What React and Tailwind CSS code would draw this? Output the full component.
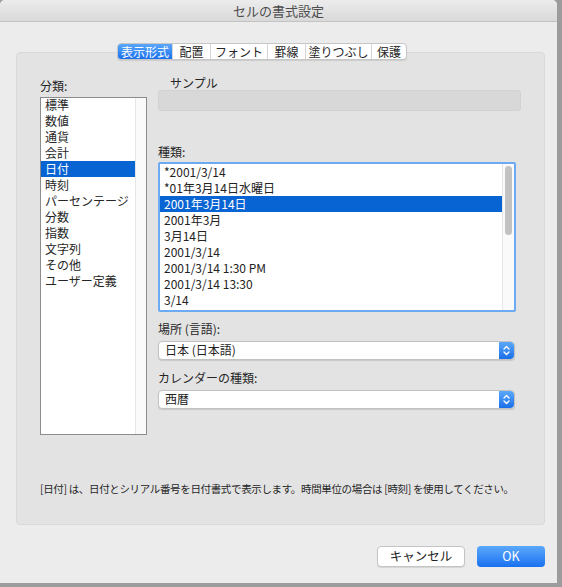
import React from "react";

const FONT = { fontFamily: '"Noto Sans CJK JP", "Noto Sans", sans-serif' };

const TABS = [
  { label: "表示形式", w: "w-[54px]" },
  { label: "配置", w: "w-[38px]" },
  { label: "フォント", w: "w-[57px]" },
  { label: "罫線", w: "w-[38px]" },
  { label: "塗りつぶし", w: "w-[66px]" },
  { label: "保護", w: "w-[35px]" },
];

const CATEGORIES = [
  "標準",
  "数値",
  "通貨",
  "会計",
  "日付",
  "時刻",
  "パーセンテージ",
  "分数",
  "指数",
  "文字列",
  "その他",
  "ユーザー定義",
];

const TYPES = [
  "*2001/3/14",
  "*01年3月14日水曜日",
  "2001年3月14日",
  "2001年3月",
  "3月14日",
  "2001/3/14",
  "2001/3/14 1:30 PM",
  "2001/3/14 13:30",
  "3/14",
];

function Stepper() {
  return (
    <div className="w-[15px] h-full rounded-r-[4px] bg-gradient-to-b from-[#5aa8fa] to-[#1a6fe9] flex items-center justify-center">
      <svg width="9" height="13" viewBox="0 0 9 13" fill="none">
        <path d="M2 5 L4.5 2.5 L7 5" stroke="white" strokeWidth="1.3" strokeLinecap="round" strokeLinejoin="round" />
        <path d="M2 8 L4.5 10.5 L7 8" stroke="white" strokeWidth="1.3" strokeLinecap="round" strokeLinejoin="round" />
      </svg>
    </div>
  );
}

function Popup({ value }) {
  return (
    <div className="mt-[4px] h-[19px] w-[357px] flex items-stretch rounded-[4px] bg-white border border-[#c2c2c2] shadow-[0_1px_1px_rgba(0,0,0,0.12)]">
      <div className="flex-1 pl-[6px] text-[12px] leading-[16px] text-[#222]">{value}</div>
      <Stepper />
    </div>
  );
}

export default function App() {
  return (
    <div className="w-[562px] h-[587px] bg-[#9c9c9c] overflow-hidden" style={FONT}>
      <div className="w-[557px] h-[583px] bg-[#ececec] rounded-t-[5px] flex flex-col">
        {/* タイトルバー */}
        <div className="h-[22px] shrink-0 rounded-t-[5px] bg-gradient-to-b from-[#ececec] to-[#d9d9d9] border-b border-[#c3c3c3] flex items-center justify-center text-[13px] text-[#4d4d4d]">
          セルの書式設定
        </div>

        {/* タブ */}
        <div className="mt-[21px] ml-[117px] h-[17px] flex relative z-10">
          <div className="flex rounded-[4px] border border-[#c6c6c6] bg-white shadow-[0_1px_1px_rgba(0,0,0,0.1)] overflow-hidden">
            {TABS.map((t, i) => (
              <div
                key={t.label}
                className={
                  i === 0
                    ? `${t.w} flex items-center justify-center text-[12px] text-white bg-gradient-to-b from-[#5aa6fa] to-[#1870ee]`
                    : `${t.w} flex items-center justify-center text-[12px] text-[#262626] border-l border-[#d6d6d6]`
                }
              >
                {t.label}
              </div>
            ))}
          </div>
        </div>

        {/* パネル */}
        <div className="-mt-[8px] ml-[16px] w-[529px] h-[473px] rounded-[4px] bg-[#e3e3e3] border border-[#d9d9d9] flex flex-col pt-[22px] pl-[23px]">
          <div className="flex">
            {/* 分類 */}
            <div className="w-[107px] pt-[3px]">
              <div className="h-[16px] text-[12px] leading-[16px] text-[#262626]">分類:</div>
              <div className="mt-[3px] h-[338px] bg-white border border-[#8c8c8c] flex overflow-hidden">
                <div className="flex-1 -mt-[1px]">
                  {CATEGORIES.map((c) => (
                    <div
                      key={c}
                      className={
                        c === "日付"
                          ? "h-[16px] pl-[4px] text-[12px] leading-[15px] bg-[#0863d3] text-white"
                          : "h-[16px] pl-[4px] text-[12px] leading-[15px] text-[#262626]"
                      }
                    >
                      {c}
                    </div>
                  ))}
                </div>
                <div className="w-[11px] bg-[#fafafa] border-l border-[#e6e6e6]" />
              </div>
            </div>

            {/* 右側 */}
            <div className="ml-[11px] w-[364px]">
              <div className="h-[16px] pl-[12px] text-[12px] leading-[16px] text-[#262626]">サンプル</div>
              <div className="mt-[-1px] h-[21px] w-[363px] rounded-[3px] bg-[#d8d8d8] border border-[#d2d2d2]" />

              <div className="mt-[33px] h-[16px] text-[12px] leading-[16px] text-[#262626]">種類:</div>
              <div className="mt-[2px] h-[150px] w-[358px] bg-white border-2 border-[#6cabf2] rounded-[2px] flex">
                <div className="flex-1">
                  {TYPES.map((t, i) => (
                    <div
                      key={t + i}
                      className={
                        i === 2
                          ? "h-[16px] pl-[4px] text-[12px] leading-[15px] bg-[#0863d3] text-white"
                          : "h-[16px] pl-[4px] text-[12px] leading-[15px] text-[#222]"
                      }
                    >
                      {t}
                    </div>
                  ))}
                </div>
                <div className="w-[12px] border-l border-[#e6e6e6] bg-[#fafafa] pt-[2px] flex justify-center">
                  <div className="w-[7px] h-[69px] rounded-full bg-[#c2c2c2]" />
                </div>
              </div>

              <div className="mt-[9px] h-[16px] text-[12px] leading-[16px] text-[#262626]">場所 (言語):</div>
              <Popup value="日本 (日本語)" />

              <div className="mt-[10px] h-[16px] text-[12px] leading-[16px] text-[#262626]">カレンダーの種類:</div>
              <Popup value="西暦" />
            </div>
          </div>

          <div className="mt-auto mb-[27px] h-[16px] whitespace-nowrap text-[10.5px] tracking-[-0.35px] leading-[16px] text-[#262626]">
            [日付] は、日付とシリアル番号を日付書式で表示します。時間単位の場合は [時刻] を使用してください。
          </div>
        </div>

        {/* ボタン */}
        <div className="mt-[21px] pr-[12px] flex justify-end gap-[12px]">
          <div className="w-[88px] h-[21px] rounded-[4px] bg-white border border-[#c4c4c4] shadow-[0_1px_1px_rgba(0,0,0,0.1)] flex items-center justify-center text-[12.5px] text-[#222]">
            キャンセル
          </div>
          <div className="w-[68px] h-[21px] rounded-[4px] bg-gradient-to-b from-[#5aa8fb] to-[#1870ef] flex items-center justify-center text-[12.5px] text-white">
            OK
          </div>
        </div>
      </div>
    </div>
  );
}
